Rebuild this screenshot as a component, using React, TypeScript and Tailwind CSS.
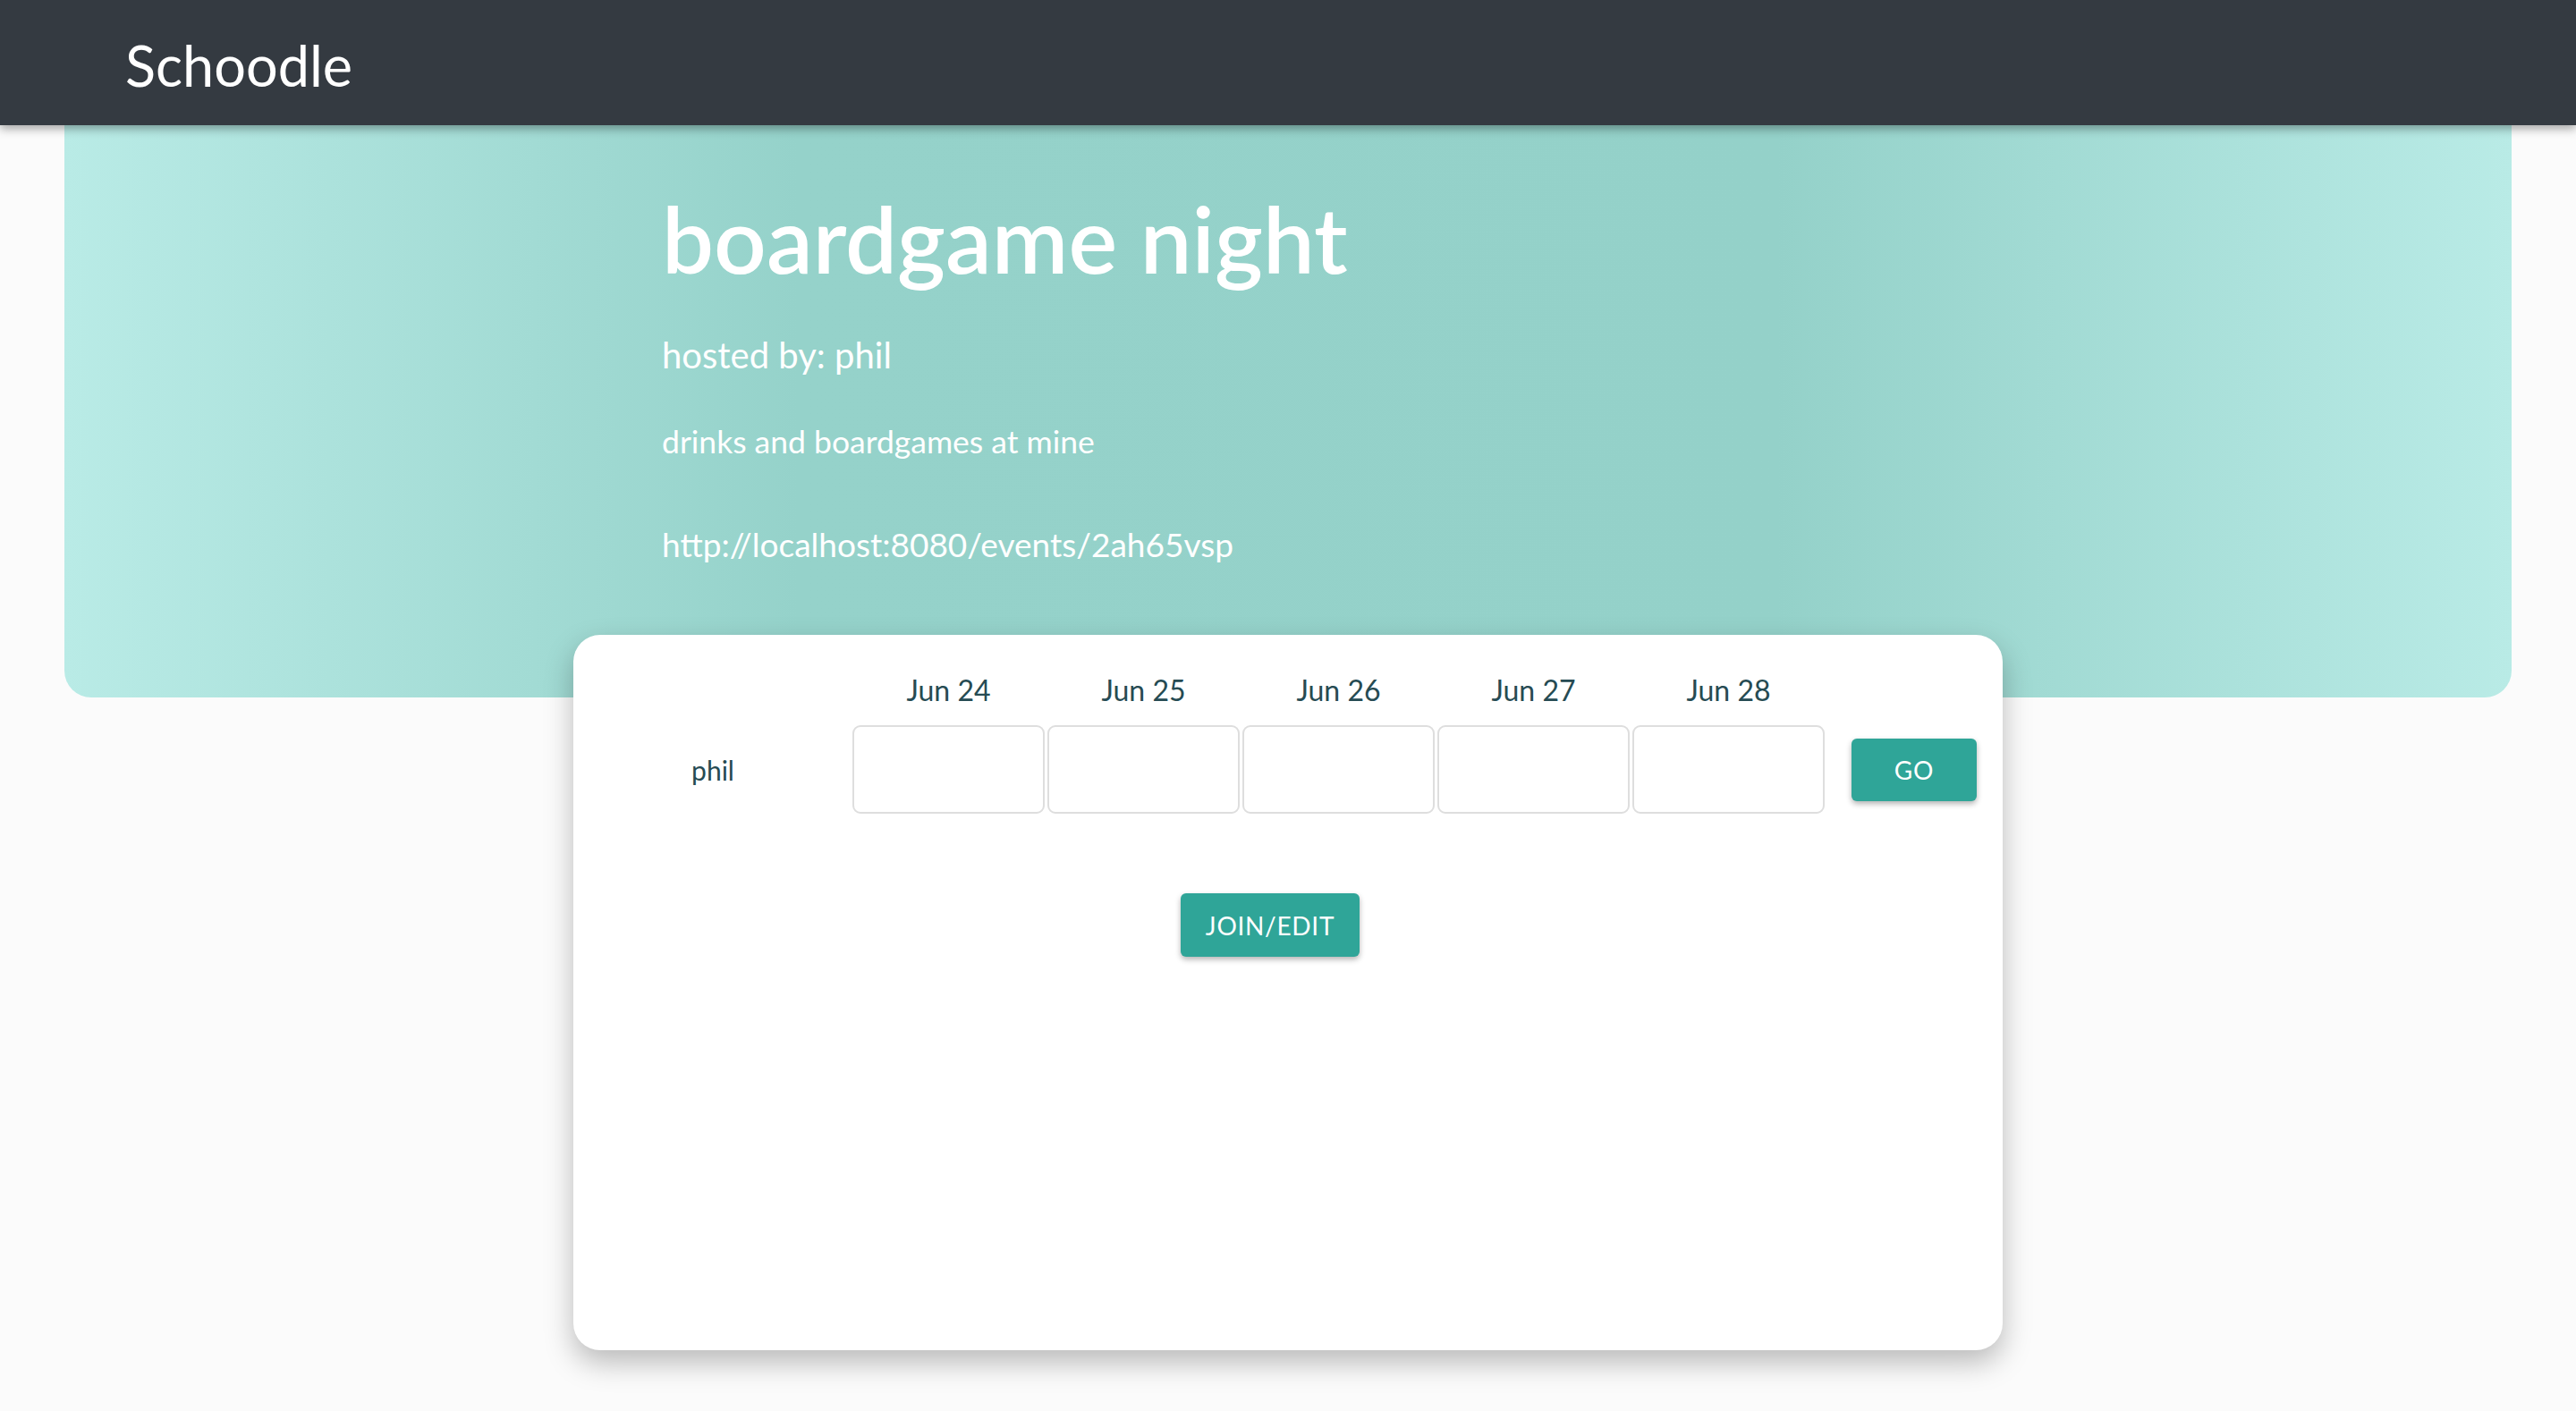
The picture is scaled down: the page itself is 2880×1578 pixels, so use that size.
const dates = ['Jun 24', 'Jun 25', 'Jun 26', 'Jun 27', 'Jun 28'];

export default function App() {
    return (
        <div className="min-h-screen bg-[#fbfbfb] font-['Lato',sans-serif]">
            {/* Navbar */}
            <div className="relative z-10 h-[140px] bg-[#343a41] px-[140px] pt-[4px] flex items-center shadow-[0_4px_10px_rgba(0,0,0,0.35)]">
                <span className="text-[63px] text-white leading-none">Schoodle</span>
            </div>

            {/* Hero */}
            <div className="mx-[72px] h-[640px] rounded-b-[30px] bg-[linear-gradient(90deg,#b9ebe6_0%,#95d2ca_30%,#94d1c9_70%,#b9ebe6_100%)] pl-[668px] pt-[66px] text-white">
                <h1 className="text-[103px] leading-[120px] font-semibold">boardgame night</h1>
                <h2 className="mt-[49px] text-[40px] leading-[44px]">hosted by: phil</h2>
                <p className="mt-[57px] text-[35.5px] leading-[36px]">drinks and boardgames at mine</p>
                <p className="mt-[77px] text-[37px] leading-[40px]">http://localhost:8080/events/2ah65vsp</p>
            </div>

            {/* Poll card */}
            <div className="relative -mt-[70px] mx-auto w-[1598px] h-[800px] bg-white rounded-[30px] shadow-[0_14px_32px_rgba(0,0,0,0.26)] pt-[42px] text-[#264b53]">
                <div className="flex">
                    <div className="w-[312px]" />
                    <div className="flex gap-[3px]">
                        {dates.map((d) => (
                            <div key={d} className="w-[215px] text-center text-[32px] leading-[40px]">{d}</div>
                        ))}
                    </div>
                </div>

                <div className="mt-[19px] flex items-center">
                    <div className="w-[312px] text-center text-[30px] pt-[2px]">phil</div>
                    <div className="flex gap-[3px]">
                        {dates.map((d) => (
                            <div key={d} className="w-[215px] h-[99px] rounded-[9px] border-2 border-[#dedede] bg-white" />
                        ))}
                    </div>
                    <button className="ml-[30px] w-[140px] h-[70px] rounded-[6px] bg-[#2fa598] text-white text-[28px] tracking-wide shadow-[0_3px_6px_rgba(0,0,0,0.3)]">
                        GO
                    </button>
                </div>

                <button className="mt-[89px] ml-[679px] w-[200px] h-[71px] rounded-[6px] bg-[#2fa598] text-white text-[28px] tracking-wide shadow-[0_3px_6px_rgba(0,0,0,0.3)]">
                    JOIN/EDIT
                </button>
            </div>
        </div>
    );
}
